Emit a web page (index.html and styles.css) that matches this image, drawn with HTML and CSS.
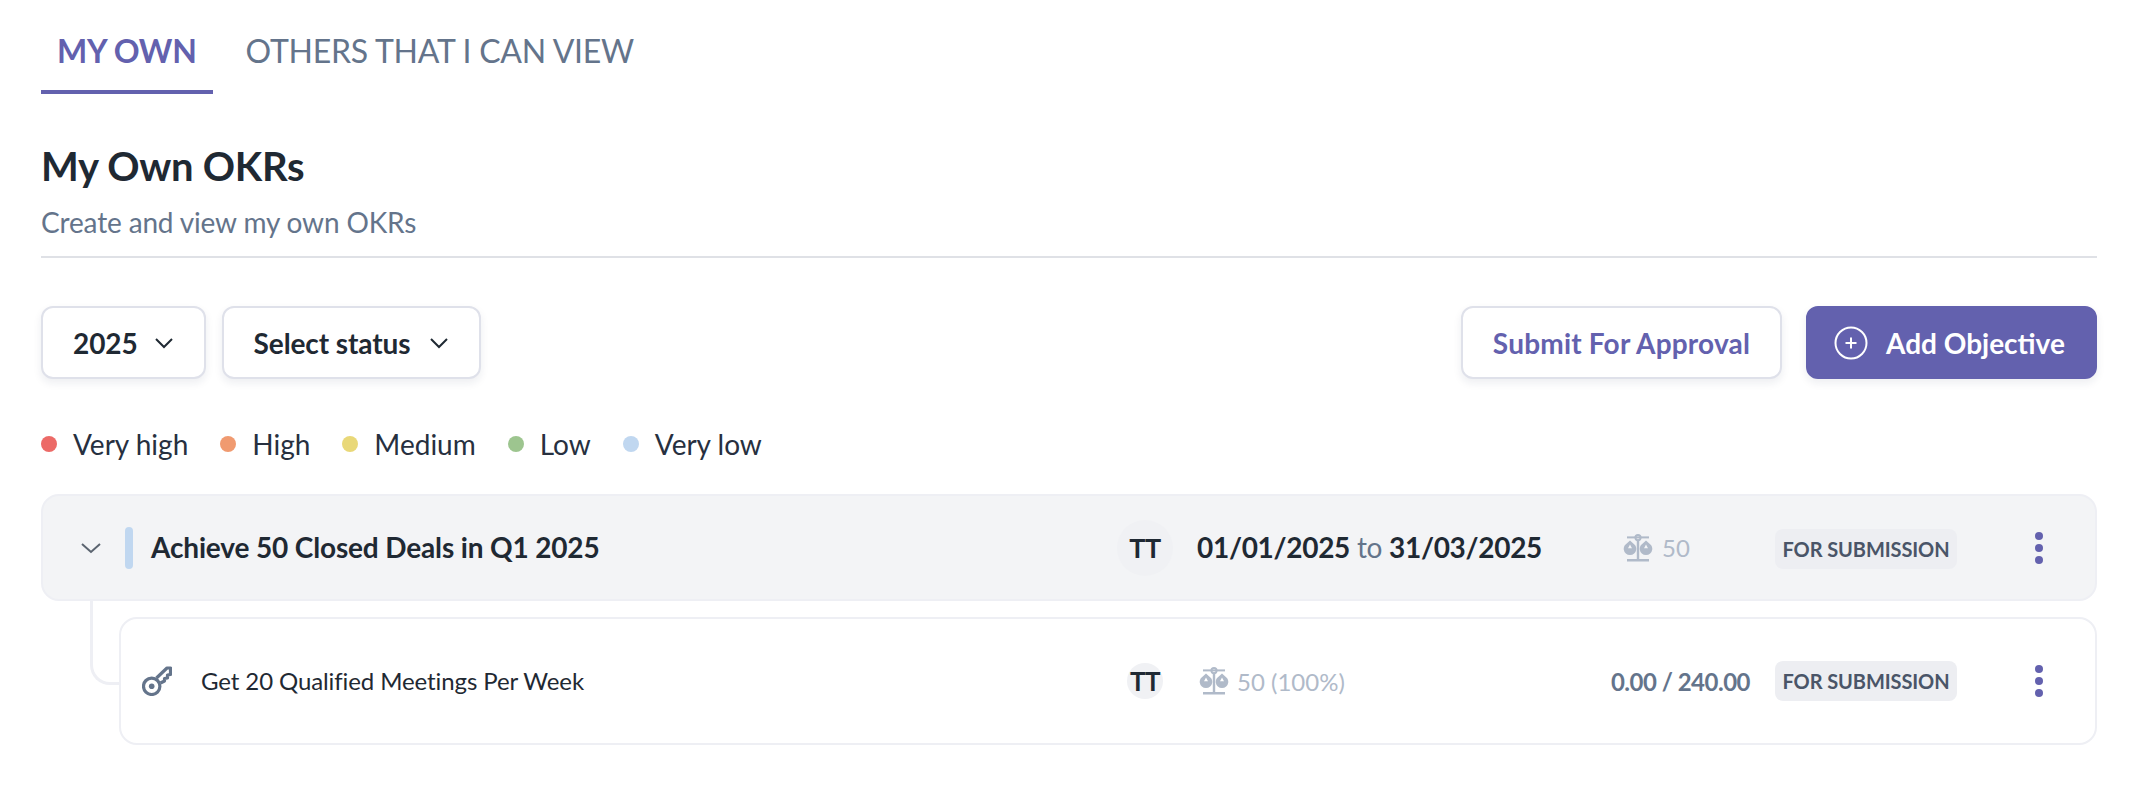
FILE: index.html
```html
<!DOCTYPE html>
<html lang="en">
<head>
    <meta charset="UTF-8">
    <meta name="viewport" content="width=device-width, initial-scale=1.0">
    <title>My Own OKRs</title>
    <link rel="stylesheet" href="styles.css">
</head>
<body>

    <nav class="tabs">
        <a class="tab tab-active">MY OWN</a>
        <a class="tab">OTHERS THAT I CAN VIEW</a>
    </nav>

    <header class="page-head">
        <h1>My Own OKRs</h1>
        <p>Create and view my own OKRs</p>
    </header>

    <div class="toolbar">
        <button class="btn btn-select" type="button">
            2025
            <svg class="caret" viewBox="0 0 20 12"><path d="M2 2l8 8 8-8"/></svg>
        </button>
        <button class="btn btn-select btn-status" type="button">
            Select status
            <svg class="caret" viewBox="0 0 20 12"><path d="M2 2l8 8 8-8"/></svg>
        </button>
        <button class="btn btn-outline" type="button">Submit For Approval</button>
        <button class="btn btn-primary" type="button">
            <svg class="plus" viewBox="0 0 34 34"><circle cx="17" cy="17" r="15.500"/><path d="M17 11.500v11M11.500 17h11"/></svg>
            Add Objective
        </button>
    </div>

    <ul class="legend">
        <li><span class="dot dot-red"></span>Very high</li>
        <li><span class="dot dot-orange"></span>High</li>
        <li><span class="dot dot-yellow"></span>Medium</li>
        <li><span class="dot dot-green"></span>Low</li>
        <li><span class="dot dot-blue"></span>Very low</li>
    </ul>

    <section class="okr">
        <div class="row row-objective">
            <svg class="toggle" viewBox="0 0 22 12"><path d="M2 2l9 8 9-8"/></svg>
            <span class="bar"></span>
            <h2 class="row-title">Achieve 50 Closed Deals in Q1 2025</h2>
            <div class="avatar-cell"><span class="avatar">TT</span></div>
            <div class="dates"><b>01/01/2025</b> to <b>31/03/2025</b></div>
            <div class="weight weight-objective">
                <svg class="scale" viewBox="0 0 30 28"><use href="#scale-icon"/></svg>
                50
            </div>
            <span class="badge">FOR SUBMISSION</span>
            <span class="more"><i></i><i></i><i></i></span>
        </div>

        <div class="row row-key">
            <span class="connector"></span>
            <svg class="key" viewBox="0 0 30 30">
                <path d="M14.500 12L25 2H28.500V8.500L25.500 9V12L22.500 12.500V15L18.500 17"/>
                <circle cx="9.700" cy="20.300" r="8.200"/>
                <circle class="key-hole" cx="9.700" cy="20.300" r="2.800"/>
            </svg>
            <div class="key-title">Get 20 Qualified Meetings Per Week</div>
            <div class="avatar-cell"><span class="avatar avatar-small">TT</span></div>
            <div class="weight weight-key">
                <svg class="scale" viewBox="0 0 30 28"><use href="#scale-icon"/></svg>
                50 (100%)
            </div>
            <div class="progress">0.00 / 240.00</div>
            <span class="badge">FOR SUBMISSION</span>
            <span class="more"><i></i><i></i><i></i></span>
        </div>
    </section>

    <svg class="icon-defs" aria-hidden="true">
        <symbol id="scale-icon" viewBox="0 0 30 28">
            <rect x="4" y="2.400" width="22" height="2"/>
            <path fill-rule="evenodd" d="M15 0A3.600 3.600 0 1 1 15 7.200A3.600 3.600 0 1 1 15 0ZM15 2A1.600 1.600 0 1 0 15 5.200A1.600 1.600 0 1 0 15 2Z"/>
            <rect x="13.800" y="7" width="2.400" height="18"/>
            <rect x="4" y="25" width="22" height="2.500"/>
            <path fill-rule="evenodd" d="M7 6.500L12.200 11.200A6.300 6.300 0 1 1 1.800 11.200ZM7 10.500L5 14.300H9Z"/>
            <path fill-rule="evenodd" d="M23 6.500L28.200 11.200A6.300 6.300 0 1 1 17.800 11.200ZM23 10.500L21 14.300H25Z"/>
        </symbol>
    </svg>

</body>
</html>
```

FILE: styles.css
```css
* {
    box-sizing: border-box;
}

body {
    margin: 0;
    padding: 0 47px 0 41px;
    background: #ffffff;
    color: #1f2933;
    font-family: Lato, "Open Sans", sans-serif;
}

.tabs {
    display: flex;
    gap: 17px;
    height: 94px;
}

.tab {
    padding: 30px 16px 0;
    font-size: 32px;
    line-height: 42px;
    letter-spacing: -0.25px;
    color: #64748b;
}

.tab-active {
    color: #6361ae;
    font-weight: 700;
    border-bottom: 4px solid #6361ae;
}

.page-head {
    height: 164px;
    padding-top: 49px;
    border-bottom: 2px solid #dfe1e6;
}

.page-head h1 {
    margin: 0;
    font-size: 40px;
    line-height: 46px;
    font-weight: 700;
    letter-spacing: -0.3px;
}

.page-head p {
    margin: 16px 0 0;
    font-size: 28px;
    line-height: 34px;
    letter-spacing: -0.15px;
    color: #64748b;
}

.toolbar {
    display: flex;
    gap: 16px;
    margin-top: 48px;
}

.btn {
    display: flex;
    align-items: center;
    height: 73px;
    border: 2px solid #dfe1ea;
    border-radius: 12px;
    background: #ffffff;
    box-shadow: 0 4px 8px rgba(30, 40, 80, 0.08);
    font-family: inherit;
    font-size: 28px;
    font-weight: 700;
    color: #1f2933;
}

.btn-select {
    gap: 16px;
    padding: 0 30px;
    letter-spacing: -0.1px;
}

.btn-status {
    gap: 19px;
}

.caret {
    width: 20px;
    height: 12px;
    fill: none;
    stroke: #1f2933;
    stroke-width: 2;
}

.btn-outline {
    justify-content: center;
    width: 321px;
    margin-left: auto;
    margin-right: 8px;
    letter-spacing: 0.2px;
    color: #6361ae;
}

.btn-primary {
    gap: 18px;
    width: 291px;
    padding: 0 0 0 26px;
    border-color: #6361ae;
    background: #6361ae;
    color: #ffffff;
}

.plus {
    width: 34px;
    height: 34px;
    fill: none;
    stroke: #ffffff;
    stroke-width: 2;
}

.legend {
    display: flex;
    align-items: center;
    gap: 32px;
    height: 34px;
    margin: 48px 0 33px;
    padding: 0;
    list-style: none;
    font-size: 28px;
    color: #27303f;
}

.legend li {
    display: flex;
    align-items: center;
    gap: 16px;
}

.dot {
    width: 16px;
    height: 16px;
    border-radius: 50%;
}

.dot-red { background: #ec6a67; }
.dot-orange { background: #f09a70; }
.dot-yellow { background: #e9d878; }
.dot-green { background: #9dc58f; }
.dot-blue { background: #c0d7f0; }

.row {
    display: flex;
    align-items: center;
    border: 2px solid #eeeff4;
    border-radius: 18px;
}

.row-objective {
    height: 107px;
    padding-left: 37px;
    background: #f3f4f6;
}

.row-objective .badge {
    margin-top: 3px;
}

.toggle {
    width: 22px;
    height: 12px;
    fill: none;
    stroke: #5b6470;
    stroke-width: 2;
}

.bar {
    width: 8px;
    height: 42px;
    margin-left: 23px;
    border-radius: 4px;
    background: #c0d7f0;
}

.row-title {
    flex: 1;
    margin: 0 0 0 18px;
    padding-bottom: 1px;
    font-size: 28px;
    font-weight: 700;
    letter-spacing: -0.15px;
}

.avatar-cell {
    display: flex;
    justify-content: center;
    width: 56px;
}

.avatar {
    display: flex;
    align-items: center;
    justify-content: center;
    flex: none;
    width: 56px;
    height: 56px;
    border-radius: 50%;
    background: #f0f1f4;
    font-size: 27px;
    font-weight: 700;
    letter-spacing: -0.5px;
}

.avatar-small {
    width: 36px;
    height: 36px;
    font-size: 26px;
}

.dates {
    width: 426px;
    margin-left: 24px;
    padding-bottom: 1px;
    font-size: 28px;
    letter-spacing: -0.3px;
    color: #64748b;
}

.dates b {
    color: #1f2933;
}

.weight {
    display: flex;
    align-items: center;
    gap: 9px;
    font-size: 24px;
    color: #b0bac9;
}

.weight-objective {
    width: 152px;
}

.weight-key {
    width: 346px;
    margin-left: 26px;
    gap: 8px;
}

.scale {
    width: 30px;
    height: 28px;
    fill: #b0bac9;
}

.badge {
    flex: none;
    width: 182px;
    height: 40px;
    border-radius: 8px;
    background: #edeef2;
    font-size: 20px;
    font-weight: 700;
    line-height: 40px;
    letter-spacing: -0.1px;
    text-align: center;
    color: #4a5568;
}

.more {
    display: flex;
    flex-direction: column;
    gap: 4px;
    margin: 0 52px 0 78px;
}

.more i {
    width: 8px;
    height: 8px;
    border-radius: 50%;
    background: #6361ae;
}

.row-key {
    position: relative;
    height: 128px;
    margin: 16px 0 0 78px;
    padding-left: 21px;
}

.connector {
    position: absolute;
    left: -31px;
    top: -18px;
    width: 31px;
    height: 84px;
    border-left: 3px solid #eeeff4;
    border-bottom: 3px solid #eeeff4;
    border-bottom-left-radius: 20px;
}

.key {
    width: 30px;
    height: 30px;
    fill: none;
    stroke: #64748b;
    stroke-width: 3.2;
    stroke-linejoin: round;
}

.key-hole {
    fill: #64748b;
    stroke: none;
}

.key-title {
    flex: 1;
    margin-left: 29px;
    padding-bottom: 2px;
    font-size: 24px;
    letter-spacing: -0.1px;
}

.progress {
    width: 205px;
    margin-right: 25px;
    font-size: 24px;
    font-weight: 700;
    letter-spacing: -0.5px;
    text-align: right;
    color: #64748b;
}

.icon-defs {
    display: none;
}
```
